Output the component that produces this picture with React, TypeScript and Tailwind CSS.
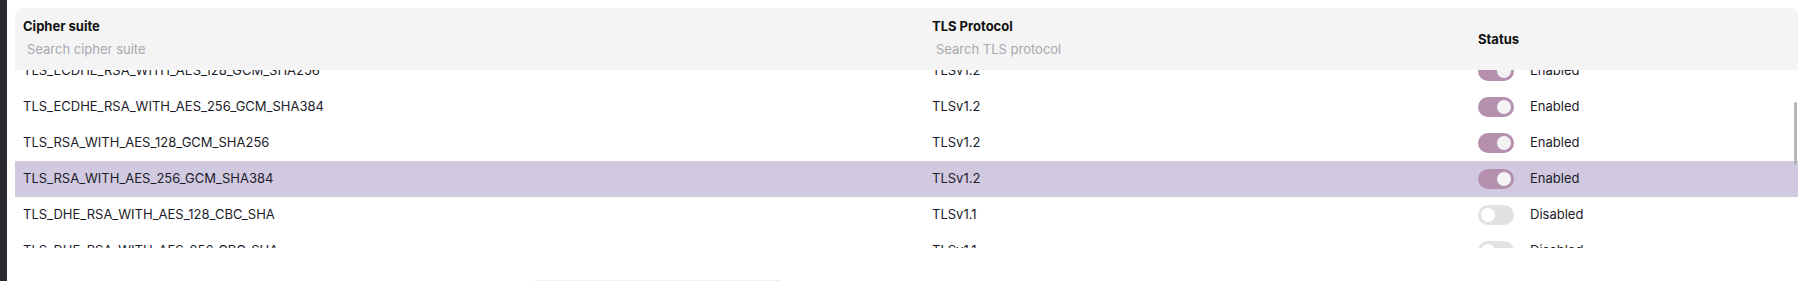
import React from "react";

type Row = { suite: string; proto: string; enabled: boolean; selected?: boolean };

const rows: Row[] = [
  { suite: "TLS_ECDHE_RSA_WITH_AES_128_GCM_SHA256", proto: "TLSv1.2", enabled: true },
  { suite: "TLS_ECDHE_RSA_WITH_AES_256_GCM_SHA384", proto: "TLSv1.2", enabled: true },
  { suite: "TLS_RSA_WITH_AES_128_GCM_SHA256", proto: "TLSv1.2", enabled: true },
  { suite: "TLS_RSA_WITH_AES_256_GCM_SHA384", proto: "TLSv1.2", enabled: true, selected: true },
  { suite: "TLS_DHE_RSA_WITH_AES_128_CBC_SHA", proto: "TLSv1.1", enabled: false },
  { suite: "TLS_DHE_RSA_WITH_AES_256_CBC_SHA", proto: "TLSv1.1", enabled: false },
];

function Toggle({ on }: { on: boolean }) {
  return (
    <div
      className={
        on
          ? "flex h-[20px] w-[36px] shrink-0 items-center justify-end rounded-full bg-[#b48fae] px-[3px]"
          : "flex h-[20px] w-[36px] shrink-0 items-center justify-start rounded-full bg-[#e2e2e2] px-[3px]"
      }
    >
      <div className={on ? "h-[14px] w-[14px] rounded-full bg-[#f3f3f3]" : "h-[14px] w-[14px] rounded-full bg-white"} />
    </div>
  );
}

export default function App() {
  return (
    <div
      className="flex h-[281px] w-[1801px] overflow-hidden bg-white text-[13px] text-[#1c1c2a]"
      style={{ fontFamily: "Inter, 'Noto Sans', sans-serif" }}
    >
      <div className="h-full w-[7px] shrink-0 bg-[#28282e]" />
      <div className="flex w-[1791px] flex-col pl-[8px] pt-[8px]">
        <div className="relative h-[240px] w-[1783px] shrink-0 overflow-hidden rounded-t-lg">
          <div className="relative z-10 flex h-[62px] bg-[#f4f4f4]">
            <div className="flex w-[909px] flex-col px-[8px] pt-[10px]">
              <div className="h-[16px] font-bold leading-[16px] text-[#111]">Cipher suite</div>
              <input
                className="mt-[3px] h-[24px] bg-transparent pl-[4px] text-[13px] outline-none placeholder:text-[#a8a8b0]"
                placeholder="Search cipher suite"
              />
            </div>
            <div className="flex w-[546px] flex-col px-[8px] pt-[10px]">
              <div className="h-[16px] font-bold leading-[16px] text-[#111]">TLS Protocol</div>
              <input
                className="mt-[3px] h-[24px] bg-transparent pl-[4px] text-[13px] outline-none placeholder:text-[#a8a8b0]"
                placeholder="Search TLS protocol"
              />
            </div>
            <div className="flex flex-1 items-center px-[8px] pt-[2px]">
              <div className="font-bold text-[#111]">Status</div>
            </div>
          </div>
          <div className="-mt-[17px] flex flex-col">
            {rows.map((r) => (
              <div
                key={r.suite}
                className={r.selected ? "flex h-[36px] shrink-0 items-center bg-[#d1c9e0]" : "flex h-[36px] shrink-0 items-center bg-white"}
              >
                <div className="w-[909px] px-[8px]">{r.suite}</div>
                <div className="w-[546px] px-[8px]">{r.proto}</div>
                <div className="flex flex-1 items-center gap-[16px] px-[8px]">
                  <Toggle on={r.enabled} />
                  <span>{r.enabled ? "Enabled" : "Disabled"}</span>
                </div>
              </div>
            ))}
          </div>
          <div className="absolute right-[1px] top-[94px] h-[63px] w-[3px] rounded-full bg-[#b5b5b5]" />
        </div>
        <div className="ml-[519px] mt-[32px] h-[1px] w-[246px] shrink-0 bg-[#efefef]" />
      </div>
    </div>
  );
}
